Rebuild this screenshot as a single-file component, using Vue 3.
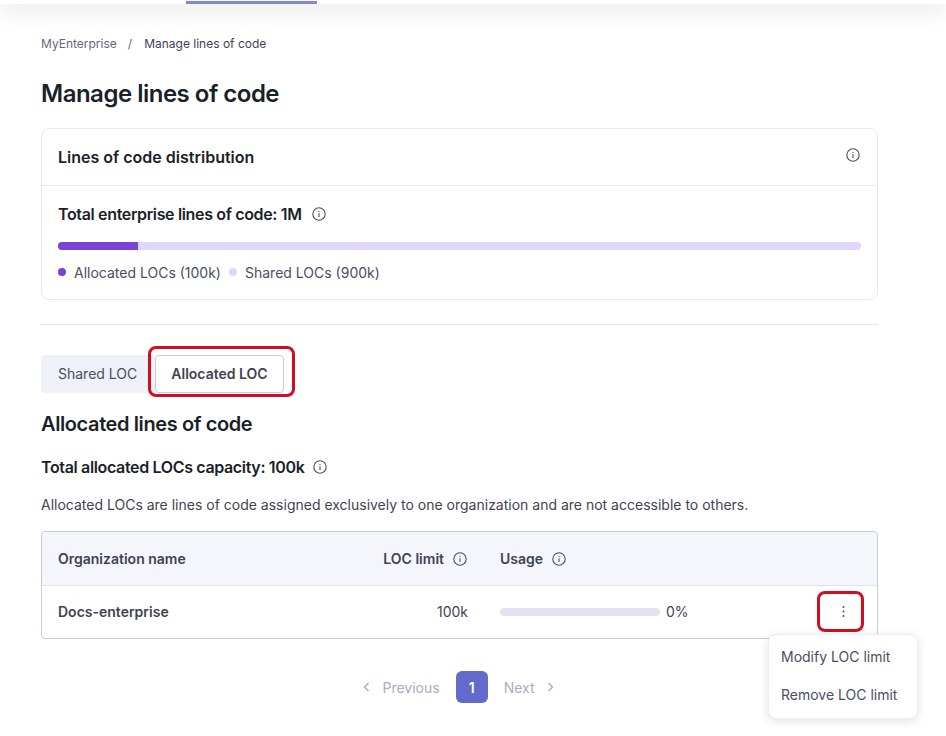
<script setup>
const tabs = [
  { label: 'Shared LOC', active: false },
  { label: 'Allocated LOC', active: true }
]
const menuItems = ['Modify LOC limit', 'Remove LOC limit']
const usage = 0
</script>

<template>
  <div class="page">
    <header class="topbar">
      <span class="topbar-active"></span>
    </header>

    <main class="content">
      <nav class="breadcrumb">
        <a class="crumb-link">MyEnterprise</a>
        <span class="crumb-sep">/</span>
        <span class="crumb-current">Manage lines of code</span>
      </nav>

      <h1 class="title">Manage lines of code</h1>

      <section class="card">
        <div class="card-head">
          <h2 class="card-title">Lines of code distribution</h2>
          <svg class="info info-head" viewBox="0 0 14 14"><circle cx="7" cy="7" r="6.2" /><path d="M7 6.3v3.6M7 4v1" /></svg>
        </div>
        <div class="card-body">
          <div class="stat">
            <span>Total enterprise lines of code: 1M</span>
            <svg class="info" viewBox="0 0 14 14"><circle cx="7" cy="7" r="6.2" /><path d="M7 6.3v3.6M7 4v1" /></svg>
          </div>
          <div class="dist-bar"><div class="dist-fill"></div></div>
          <div class="legend">
            <span class="dot dot-dark"></span>
            <span class="legend-text">Allocated LOCs (100k)</span>
            <span class="dot dot-light"></span>
            <span class="legend-text">Shared LOCs (900k)</span>
          </div>
        </div>
      </section>

      <hr class="divider" />

      <div class="tabs">
        <button
          v-for="tab in tabs"
          :key="tab.label"
          type="button"
          class="tab"
          :class="{ active: tab.active }"
        >
          {{ tab.label }}
          <span v-if="tab.active" class="mark mark-tab"></span>
        </button>
      </div>

      <h2 class="section-title">Allocated lines of code</h2>

      <div class="stat stat-section">
        <span>Total allocated LOCs capacity: 100k</span>
        <svg class="info" viewBox="0 0 14 14"><circle cx="7" cy="7" r="6.2" /><path d="M7 6.3v3.6M7 4v1" /></svg>
      </div>

      <p class="desc">Allocated LOCs are lines of code assigned exclusively to one organization and are not accessible to others.</p>

      <div class="table">
        <div class="row row-head">
          <div class="col-name">Organization name</div>
          <div class="col-limit">
            <span>LOC limit</span>
            <svg class="info" viewBox="0 0 14 14"><circle cx="7" cy="7" r="6.2" /><path d="M7 6.3v3.6M7 4v1" /></svg>
          </div>
          <div class="col-usage">
            <span>Usage</span>
            <svg class="info" viewBox="0 0 14 14"><circle cx="7" cy="7" r="6.2" /><path d="M7 6.3v3.6M7 4v1" /></svg>
          </div>
        </div>
        <div class="row row-body">
          <div class="col-name org">Docs-enterprise</div>
          <div class="col-limit limit-val">100k</div>
          <div class="col-usage usage-val">
            <div class="usage-bar"><div class="usage-fill" :style="{ width: usage + '%' }"></div></div>
            <span>{{ usage }}%</span>
          </div>
          <button type="button" class="kebab">
            <svg width="3" height="13" viewBox="0 0 3 13"><circle cx="1.5" cy="2" r="1" /><circle cx="1.5" cy="6.5" r="1" /><circle cx="1.5" cy="11" r="1" /></svg>
            <span class="mark mark-kebab"></span>
          </button>
          <div class="menu">
            <button v-for="item in menuItems" :key="item" type="button" class="menu-item">{{ item }}</button>
          </div>
        </div>
      </div>

      <div class="pager">
        <span class="page-nav">
          <svg width="8" height="10" viewBox="0 0 8 10"><path d="M5.5 1L1.5 5l4 4" /></svg>
          Previous
        </span>
        <span class="page-num">1</span>
        <span class="page-nav">
          Next
          <svg width="8" height="10" viewBox="0 0 8 10"><path d="M2.5 1l4 4-4 4" /></svg>
        </span>
      </div>
    </main>
  </div>
</template>

<style>
body {
  margin: 0;
  background: #fff;
}
</style>

<style scoped>
.page {
  height: 736px;
  overflow: hidden;
  font-family: Inter, "Liberation Sans", sans-serif;
  color: #1b1f2a;
  background: #fff;
}

.topbar {
  height: 4px;
  padding-left: 186px;
  background: #fff;
  box-shadow: 0 5px 18px rgba(30, 30, 40, 0.28);
}

.topbar-active {
  display: block;
  width: 131px;
  height: 3px;
  position: relative;
  top: 1px;
  background: #8385d6;
}

.content {
  width: 837px;
  margin-left: 41px;
}

.breadcrumb {
  display: flex;
  align-items: center;
  height: 16px;
  margin-top: 31px;
  font-size: 12px;
  color: #3f4354;
}

.crumb-link {
  color: #64697e;
}

.crumb-sep {
  margin: 0 12px 0 11px;
  color: #64697e;
}

.title {
  margin: 27px 0 0;
  font-size: 24px;
  line-height: 32px;
  font-weight: 600;
  letter-spacing: -0.5px;
}

.card {
  margin-top: 18px;
  height: 172px;
  box-sizing: border-box;
  border: 1px solid #e8e9ee;
  border-radius: 8px;
}

.card-head {
  display: flex;
  align-items: center;
  justify-content: space-between;
  height: 56px;
  padding: 0 17px 0 16px;
  border-bottom: 1px solid #e8e9ee;
}

.card-title {
  margin: 0;
  font-size: 16px;
  font-weight: 600;
}

.info {
  width: 14px;
  height: 14px;
  flex: none;
  fill: none;
  stroke: #4a4e63;
  stroke-width: 1.1;
}

.info-head {
  position: relative;
  top: -2px;
}

.card-body {
  padding: 19px 16px 0;
}

.stat {
  display: flex;
  align-items: center;
  gap: 10px;
  font-size: 16px;
  line-height: 18px;
  font-weight: 600;
  letter-spacing: -0.35px;
}

.dist-bar {
  height: 8px;
  margin-top: 19px;
  border-radius: 4px;
  overflow: hidden;
  background: #e0d5fb;
}

.dist-fill {
  width: 80px;
  height: 100%;
  background: #7a43d6;
}

.legend {
  display: flex;
  align-items: center;
  margin-top: 13px;
  height: 18px;
  font-size: 14px;
  color: #4a4e63;
}

.dot {
  width: 8px;
  height: 8px;
  border-radius: 50%;
  margin-right: 8px;
}

.dot-dark {
  background: #7a43d6;
}

.dot-light {
  background: #e0d5fb;
}

.legend-text {
  margin-right: 8px;
}

.divider {
  height: 1px;
  margin: 24px 0 0;
  border: 0;
  background: #e1e4f0;
}

.tabs {
  display: flex;
  margin-top: 30px;
}

.tab {
  position: relative;
  height: 38px;
  padding: 0 18px 1px 17px;
  font-family: inherit;
  font-size: 14px;
  color: #4a4e63;
  border: 0;
  border-radius: 4px 0 0 4px;
  background: #eef1f8;
}

.tab.active {
  padding: 0 15px 1px;
  font-weight: 600;
  color: #3f4354;
  background: #fff;
  border: 1px solid #c8cade;
  border-radius: 4px;
}

.mark {
  position: absolute;
  border: 3px solid #cf0f21;
  border-radius: 8px;
  pointer-events: none;
}

.mark-tab {
  inset: -10px -12px -5px -8px;
}

.section-title {
  margin: 19px 0 0;
  font-size: 20px;
  line-height: 24px;
  font-weight: 600;
  letter-spacing: -0.4px;
}

.stat-section {
  margin-top: 22px;
  gap: 9px;
}

.desc {
  margin: 19px 0 0;
  font-size: 14px;
  line-height: 20px;
  color: #3f4354;
}

.table {
  margin-top: 16px;
  border: 1px solid #c8cade;
  border-radius: 4px;
}

.row {
  display: flex;
  align-items: center;
  position: relative;
  padding-left: 16px;
  font-size: 14px;
}

.row-head {
  height: 53px;
  border-bottom: 1px solid #e1e4f0;
  border-radius: 4px 4px 0 0;
  font-weight: 600;
  color: #3f4354;
  background: #f5f6fb;
}

.row-body {
  box-sizing: border-box;
  height: 52px;
  padding-bottom: 2px;
}

.col-name {
  width: 260px;
}

.org {
  font-weight: 600;
  color: #3f4354;
}

.col-limit {
  display: flex;
  align-items: center;
  justify-content: flex-end;
  gap: 9px;
  width: 149px;
  margin-right: 33px;
}

.limit-val {
  width: 150px;
  margin-right: 32px;
  color: #3f4354;
}

.col-usage {
  display: flex;
  align-items: center;
  gap: 9px;
}

.usage-val {
  gap: 6px;
  color: #3f4354;
}

.usage-bar {
  width: 160px;
  height: 8px;
  margin-top: 1px;
  border-radius: 4px;
  background: #e1e4f0;
  overflow: hidden;
}

.usage-fill {
  height: 100%;
  background: #5f69c8;
}

.kebab {
  position: absolute;
  left: 775px;
  top: 5px;
  width: 47px;
  height: 41px;
  padding: 0 0 0 5px;
  display: flex;
  align-items: center;
  justify-content: center;
  border: 0;
  background: transparent;
}

.kebab svg {
  fill: #4a4e63;
}

.mark-kebab {
  inset: 0;
}

.menu {
  position: absolute;
  left: 726px;
  top: 48px;
  box-sizing: border-box;
  width: 150px;
  height: 85px;
  padding: 2px 0;
  border: 1px solid #eceef6;
  border-radius: 8px;
  background: #fff;
  box-shadow: 0 2px 10px rgba(40, 44, 80, 0.14);
}

.menu-item {
  display: block;
  width: 100%;
  height: 38px;
  padding: 0 12px;
  border: 0;
  background: transparent;
  font-family: inherit;
  font-size: 14px;
  color: #4a4e63;
  text-align: left;
  white-space: nowrap;
}

.pager {
  display: flex;
  align-items: center;
  justify-content: center;
  gap: 16px;
  margin-top: 32px;
  margin-left: -2px;
  font-size: 14px;
  color: #a9adc0;
}

.page-nav {
  display: flex;
  align-items: center;
  gap: 11px;
}

.page-nav svg {
  fill: none;
  stroke: #a9adc0;
  stroke-width: 1.4;
}

.page-num {
  display: flex;
  align-items: center;
  justify-content: center;
  width: 32px;
  height: 32px;
  border-radius: 6px;
  font-weight: 600;
  color: #fff;
  background: #626bcb;
}
</style>
